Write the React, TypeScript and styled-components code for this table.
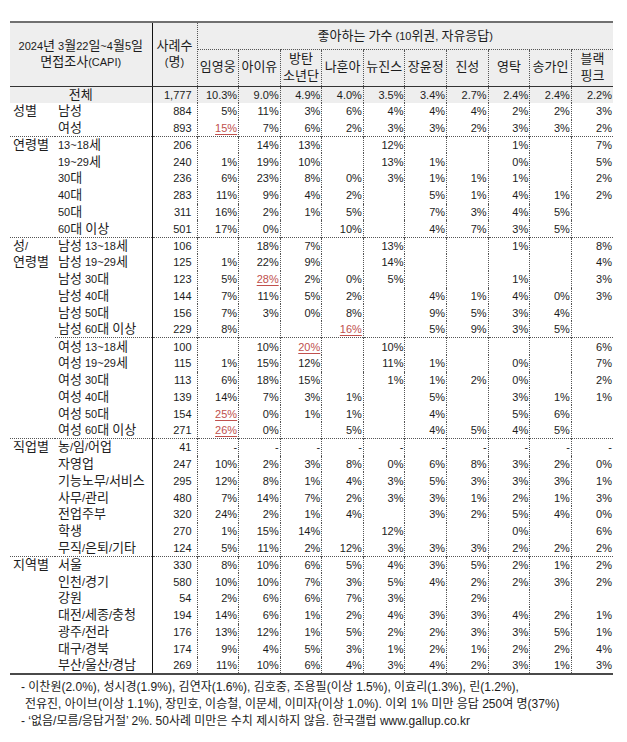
import React from "react";
import styled, { createGlobalStyle } from "styled-components";

const Global = createGlobalStyle`
  html, body { margin: 0; padding: 0; background: #ffffff; }
  body {
    font-family: "Liberation Sans", "Noto Sans CJK KR", sans-serif;
    font-size: 11px;
    color: #1c1c1c;
  }
`;

const Page = styled.div`
  padding: 21px 14px 0 10px;
  width: 603px;
`;

const Table = styled.table`
  border-collapse: collapse;
  table-layout: fixed;
  width: 603px;
  border-top: 2px solid #707070;
  border-bottom: 2px solid #4a4a4a;
`;

const Col = styled.col<{ $w: number }>`
  width: ${(p) => p.$w}px;
`;

const HeadRow = styled.tr<{ $h: number }>`
  height: ${(p) => p.$h}px;
`;

const HeadCell = styled.th<{ $right?: "solid" | "dotted"; $bottom?: "solid" | "dotted" }>`
  background: #eeeeee;
  font-weight: normal;
  padding: 0;
  text-align: center;
  vertical-align: middle;
  line-height: 16.5px;
  white-space: pre-line;
  border-right: ${(p) =>
    p.$right === "solid" ? "1px solid #111" : p.$right === "dotted" ? "1px dotted #555" : "none"};
  border-bottom: ${(p) =>
    p.$bottom === "solid" ? "1px solid #333" : p.$bottom === "dotted" ? "1px dotted #555" : "none"};
`;

const Row = styled.tr<{ $sep?: boolean; $total?: boolean }>`
  height: 16.8px;
  & > td {
    border-top: ${(p) => (p.$sep ? "1px dotted #555" : "none")};
    background: ${(p) => (p.$total ? "#eeeeee" : "transparent")};
  }
`;

const GroupCell = styled.td`
  padding: 0 0 0 3px;
  vertical-align: top;
  line-height: 16.8px;
  white-space: pre-line;
`;

const LabelCell = styled.td<{ $center?: boolean }>`
  padding: 0 0 0 ${(p) => (p.$center ? 0 : 3)}px;
  text-align: ${(p) => (p.$center ? "center" : "left")};
  white-space: nowrap;
  line-height: 16px;
  border-right: 1px solid #111;
`;

const NumCell = styled.td<{ $pad: number; $last?: boolean }>`
  padding: 0 ${(p) => p.$pad}px 0 0;
  text-align: right;
  white-space: nowrap;
  line-height: 16px;
  border-right: ${(p) => (p.$last ? "none" : "1px dotted #555")};
`;

const Hi = styled.span`
  color: #c0504d;
  text-decoration: underline;
  text-decoration-color: #c0504d;
  text-underline-offset: 2px;
`;

const Ko = styled.span`
  font-size: 13px;
`;

const Notes = styled.div`
  margin-top: 4px;
  font-size: 12px;
  line-height: 17px;
`;

const Note = styled.div`
  padding-left: 15px;
  text-indent: -4px;
  white-space: nowrap;
`;

const HANGUL = /([\u1100-\u11FF\u3130-\u318F\uAC00-\uD7AF]+)/;

const T = ({ s }: { s: string }) => (
  <>
    {s.split(HANGUL).map((part, i) => (i % 2 === 1 ? <Ko key={i}>{part}</Ko> : part))}
  </>
);

const singers = ["임영웅", "아이유", "방탄\n소년단", "나훈아", "뉴진스", "장윤정", "진성", "영탁", "송가인", "블랙\n핑크"];

type DataRow = {
  g?: string;
  gSpan?: number;
  label: string;
  n: string;
  v: string[];
  sep?: boolean;
};

const E = "";
const rows: DataRow[] = [
  { g: "성별", gSpan: 2, label: "남성", n: "884", v: ["5%", "11%", "3%", "6%", "4%", "4%", "4%", "2%", "2%", "3%"] },
  { label: "여성", n: "893", v: ["*15%", "7%", "6%", "2%", "3%", "3%", "2%", "3%", "3%", "2%"] },
  { g: "연령별", gSpan: 6, sep: true, label: "13~18세", n: "206", v: [E, "14%", "13%", E, "12%", E, E, "1%", E, "7%"] },
  { label: "19~29세", n: "240", v: ["1%", "19%", "10%", E, "13%", "1%", E, "0%", E, "5%"] },
  { label: "30대", n: "236", v: ["6%", "23%", "8%", "0%", "3%", "1%", "1%", "1%", E, "2%"] },
  { label: "40대", n: "283", v: ["11%", "9%", "4%", "2%", E, "5%", "1%", "4%", "1%", "2%"] },
  { label: "50대", n: "311", v: ["16%", "2%", "1%", "5%", E, "7%", "3%", "4%", "5%", E] },
  { label: "60대 이상", n: "501", v: ["17%", "0%", E, "10%", E, "4%", "7%", "3%", "5%", E] },
  { g: "성/\n연령별", gSpan: 12, sep: true, label: "남성 13~18세", n: "106", v: [E, "18%", "7%", E, "13%", E, E, "1%", E, "8%"] },
  { label: "남성 19~29세", n: "125", v: ["1%", "22%", "9%", E, "14%", E, E, E, E, "4%"] },
  { label: "남성 30대", n: "123", v: ["5%", "*28%", "2%", "0%", "5%", E, E, "1%", E, "3%"] },
  { label: "남성 40대", n: "144", v: ["7%", "11%", "5%", "2%", E, "4%", "1%", "4%", "0%", "3%"] },
  { label: "남성 50대", n: "156", v: ["7%", "3%", "0%", "8%", E, "9%", "5%", "3%", "4%", E] },
  { label: "남성 60대 이상", n: "229", v: ["8%", E, E, "*16%", E, "5%", "9%", "3%", "5%", E] },
  { sep: true, label: "여성 13~18세", n: "100", v: [E, "10%", "*20%", E, "10%", E, E, E, E, "6%"] },
  { label: "여성 19~29세", n: "115", v: ["1%", "15%", "12%", E, "11%", "1%", E, "0%", E, "7%"] },
  { label: "여성 30대", n: "113", v: ["6%", "18%", "15%", E, "1%", "1%", "2%", "0%", E, "2%"] },
  { label: "여성 40대", n: "139", v: ["14%", "7%", "3%", "1%", E, "5%", E, "3%", "1%", "1%"] },
  { label: "여성 50대", n: "154", v: ["*25%", "0%", "1%", "1%", E, "4%", E, "5%", "6%", E] },
  { label: "여성 60대 이상", n: "271", v: ["*26%", "0%", E, "5%", E, "4%", "5%", "4%", "5%", E] },
  { g: "직업별", gSpan: 7, sep: true, label: "농/임/어업", n: "41", v: ["-", "-", "-", "-", "-", "-", "-", "-", "-", "-"] },
  { label: "자영업", n: "247", v: ["10%", "2%", "3%", "8%", "0%", "6%", "8%", "3%", "2%", "0%"] },
  { label: "기능노무/서비스", n: "295", v: ["12%", "8%", "1%", "4%", "3%", "5%", "3%", "3%", "3%", "1%"] },
  { label: "사무/관리", n: "480", v: ["7%", "14%", "7%", "2%", "3%", "3%", "1%", "2%", "1%", "3%"] },
  { label: "전업주부", n: "320", v: ["24%", "2%", "1%", "4%", E, "3%", "2%", "5%", "4%", "0%"] },
  { label: "학생", n: "270", v: ["1%", "15%", "14%", E, "12%", E, E, "0%", E, "6%"] },
  { label: "무직/은퇴/기타", n: "124", v: ["5%", "11%", "2%", "12%", "3%", "3%", "3%", "2%", "2%", "2%"] },
  { g: "지역별", gSpan: 7, sep: true, label: "서울", n: "330", v: ["8%", "10%", "6%", "5%", "4%", "3%", "5%", "2%", "1%", "2%"] },
  { label: "인천/경기", n: "580", v: ["10%", "10%", "7%", "3%", "5%", "4%", "2%", "2%", "3%", "2%"] },
  { label: "강원", n: "54", v: ["2%", "6%", "6%", "7%", "3%", E, "2%", E, E, E] },
  { label: "대전/세종/충청", n: "194", v: ["14%", "6%", "1%", "2%", "4%", "3%", "3%", "4%", "2%", "1%"] },
  { label: "광주/전라", n: "176", v: ["13%", "12%", "1%", "5%", "2%", "2%", "3%", "3%", "5%", "1%"] },
  { label: "대구/경북", n: "174", v: ["9%", "4%", "5%", "3%", "1%", "2%", "1%", "2%", "2%", "4%"] },
  { label: "부산/울산/경남", n: "269", v: ["11%", "10%", "6%", "4%", "3%", "4%", "2%", "3%", "1%", "3%"] },
];

const total = ["10.3%", "9.0%", "4.9%", "4.0%", "3.5%", "3.4%", "2.7%", "2.4%", "2.4%", "2.2%"];

const Value = ({ s }: { s: string }) =>
  s.startsWith("*") ? <Hi>{s.slice(1)}</Hi> : <>{s}</>;

export default function App() {
  return (
    <Page>
      <Global />
      <Table>
        <colgroup>
          <Col $w={45} />
          <Col $w={97} />
          <Col $w={45} />
          {singers.map((s) => (
            <Col key={s} $w={41.6} />
          ))}
        </colgroup>
        <thead>
          <HeadRow $h={27}>
            <HeadCell colSpan={2} rowSpan={2} $right="solid" $bottom="solid">
              <T s={"2024년 3월22일~4월5일\n면접조사(CAPI)"} />
            </HeadCell>
            <HeadCell rowSpan={2} $right="dotted" $bottom="solid">
              <T s={"사례수\n(명)"} />
            </HeadCell>
            <HeadCell colSpan={10} $bottom="dotted">
              <T s="좋아하는 가수 (10위권, 자유응답)" />
            </HeadCell>
          </HeadRow>
          <HeadRow $h={37}>
            {singers.map((s, i) => (
              <HeadCell key={s} $right={i < singers.length - 1 ? "dotted" : undefined} $bottom="solid">
                <T s={s} />
              </HeadCell>
            ))}
          </HeadRow>
        </thead>
        <tbody>
          <Row $total>
            <LabelCell colSpan={2} $center>
              <T s="전체" />
            </LabelCell>
            <NumCell $pad={5}>1,777</NumCell>
            {total.map((t, i) => (
              <NumCell key={i} $pad={1} $last={i === total.length - 1}>
                {t}
              </NumCell>
            ))}
          </Row>
          {rows.map((r, ri) => (
            <Row key={ri} $sep={r.sep}>
              {r.g && (
                <GroupCell rowSpan={r.gSpan}>
                  <T s={r.g} />
                </GroupCell>
              )}
              <LabelCell>
                <T s={r.label} />
              </LabelCell>
              <NumCell $pad={5}>{r.n}</NumCell>
              {r.v.map((v, i) => (
                <NumCell key={i} $pad={1} $last={i === r.v.length - 1}>
                  <Value s={v} />
                </NumCell>
              ))}
            </Row>
          ))}
        </tbody>
      </Table>
      <Notes>
        <Note>
          - 이찬원(2.0%), 성시경(1.9%), 김연자(1.6%), 김호중, 조용필(이상 1.5%), 이효리(1.3%), 린(1.2%),
          <br />
          전유진, 아이브(이상 1.1%), 장민호, 이승철, 이문세, 이미자(이상 1.0%). 이외 1% 미만 응답 250여 명(37%)
        </Note>
        <Note>- ‘없음/모름/응답거절’ 2%. 50사례 미만은 수치 제시하지 않음. 한국갤럽 www.gallup.co.kr</Note>
      </Notes>
    </Page>
  );
}
